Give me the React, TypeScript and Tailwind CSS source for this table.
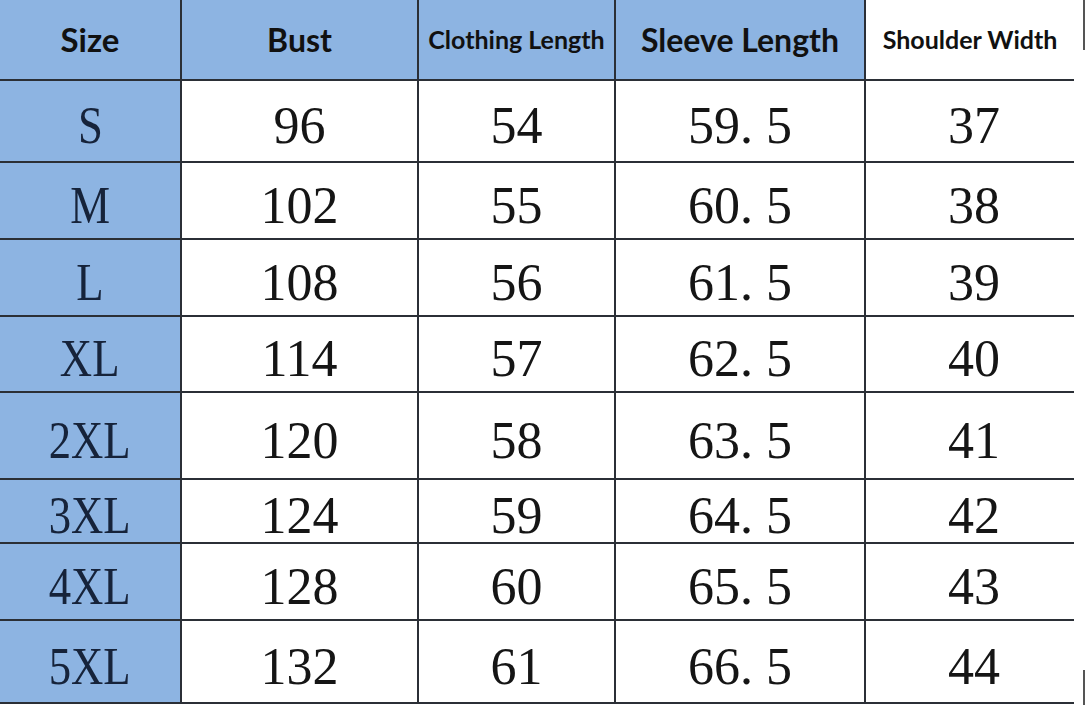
const rows = [
  { size: 'S', bust: '96', length: '54', sleeve: '59. 5', shoulder: '37', h: 'h-[82px]' },
  { size: 'M', bust: '102', length: '55', sleeve: '60. 5', shoulder: '38', h: 'h-[77px]' },
  { size: 'L', bust: '108', length: '56', sleeve: '61. 5', shoulder: '39', h: 'h-[77px]' },
  { size: 'XL', bust: '114', length: '57', sleeve: '62. 5', shoulder: '40', h: 'h-[76px]' },
  { size: '2XL', bust: '120', length: '58', sleeve: '63. 5', shoulder: '41', h: 'h-[87px]' },
  { size: '3XL', bust: '124', length: '59', sleeve: '64. 5', shoulder: '42', h: 'h-[64px]' },
  { size: '4XL', bust: '128', length: '60', sleeve: '65. 5', shoulder: '43', h: 'h-[77px]' },
  { size: '5XL', bust: '132', length: '61', sleeve: '66. 5', shoulder: '44', h: 'h-[83px]' },
];

const cols = 'grid grid-cols-[182px_237px_197px_250px_208px]';
const cell = 'flex items-center justify-center border-b-2 border-[#2b2f36]';
const headFont = "font-['Lato',sans-serif] font-bold text-[#111] whitespace-nowrap";
const numFont = "font-['Liberation_Serif',serif] text-[52px] leading-none text-[#151515]";

const App = () => {
  return (
    <div className="w-[1086px] h-[705px] bg-white flex overflow-hidden">
      <div className="w-[1074px] flex flex-col">
        <div className={`${cols} h-[81px]`}>
          <div className={`${cell} border-r-2 bg-[#8db4e2] ${headFont} text-[33px]`}>Size</div>
          <div className={`${cell} border-r-2 bg-[#8db4e2] ${headFont} text-[32px]`}>Bust</div>
          <div className={`${cell} border-r-2 bg-[#8db4e2] ${headFont} text-[25px]`}>Clothing Length</div>
          <div className={`${cell} border-r-2 bg-[#8db4e2] ${headFont} text-[32px]`}>Sleeve Length</div>
          <div className={`${cell} ${headFont} text-[25px]`}>Shoulder Width</div>
        </div>
        {rows.map((r) => (
          <div key={r.size} className={`${cols} ${r.h}`}>
            <div className={`${cell} border-r-2 bg-[#8db4e2] ${numFont} pt-[10px]`}>
              <span className="inline-block scale-x-[0.86] text-[#16233a]">{r.size}</span>
            </div>
            <div className={`${cell} border-r-2 ${numFont} pt-[10px]`}>{r.bust}</div>
            <div className={`${cell} border-r-2 ${numFont} pt-[10px]`}>{r.length}</div>
            <div className={`${cell} border-r-2 ${numFont} pt-[10px]`}>{r.sleeve}</div>
            <div className={`${cell} ${numFont} pt-[10px] pl-2`}>{r.shoulder}</div>
          </div>
        ))}
      </div>
      <div className="flex-1 flex flex-col justify-between">
        <div className="w-[11px] h-[50px] border-r-2 border-[#555]" />
        <div className="w-[11px] h-[35px] border-r-2 border-[#555]" />
      </div>
    </div>
  );
};

export default App;
